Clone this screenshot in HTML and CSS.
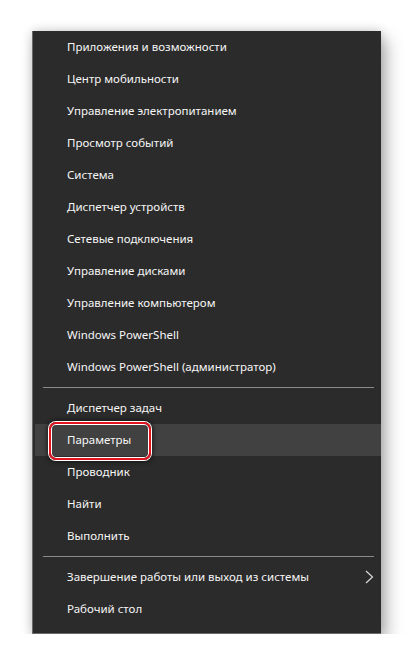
FILE: index.html
```html
<!DOCTYPE html>
<html lang="ru">
<head>
    <meta charset="UTF-8">
    <meta name="viewport" content="width=device-width, initial-scale=1.0">
    <title>Меню Win+X</title>
    <link rel="stylesheet" href="styles.css">
</head>
<body>
    <div class="menu">
        <ul class="menu-list">
            <li class="menu-item">Приложения и возможности</li>
            <li class="menu-item">Центр мобильности</li>
            <li class="menu-item">Управление электропитанием</li>
            <li class="menu-item">Просмотр событий</li>
            <li class="menu-item">Система</li>
            <li class="menu-item">Диспетчер устройств</li>
            <li class="menu-item">Сетевые подключения</li>
            <li class="menu-item">Управление дисками</li>
            <li class="menu-item">Управление компьютером</li>
            <li class="menu-item">Windows PowerShell</li>
            <li class="menu-item">Windows PowerShell (администратор)</li>
        </ul>
        <div class="separator"></div>
        <ul class="menu-list">
            <li class="menu-item">Диспетчер задач</li>
            <li class="menu-item active">
                Параметры
                <span class="mark"></span>
            </li>
            <li class="menu-item">Проводник</li>
            <li class="menu-item">Найти</li>
            <li class="menu-item">Выполнить</li>
        </ul>
        <div class="separator"></div>
        <ul class="menu-list">
            <li class="menu-item has-sub">
                Завершение работы или выход из системы
                <svg class="chevron" width="9" height="14" viewBox="0 0 9 14">
                    <polyline points="1,1 7.5,7 1,13" fill="none" stroke="#d8d8d8" stroke-width="1.2"/>
                </svg>
            </li>
            <li class="menu-item">Рабочий стол</li>
        </ul>
    </div>
</body>
</html>
```

FILE: styles.css
```css
body {
    margin: 0;
    padding: 31px 0 0 32px;
    background-color: #fff;
    font-family: "Noto Sans", "Open Sans", sans-serif;
}

.menu {
    width: 348px;
    padding-bottom: 8px;
    background-color: #2b2b2b;
    border-left: 1px solid #6a6a6a;
    border-bottom: 1px solid #6a6a6a;
    box-shadow: 0 0 10px rgba(0, 0, 0, 0.18), 6px 8px 16px rgba(0, 0, 0, 0.28);
}

.menu-list {
    list-style-type: none;
    margin: 0;
    padding: 0;
}

.menu-item {
    position: relative;
    display: flex;
    align-items: center;
    box-sizing: border-box;
    height: 32px;
    padding: 0 0 2px 34px;
    color: #f6f6f6;
    font-size: 11.5px;
}

.menu-item.active {
    margin-left: 2px;
    padding-left: 32px;
    background-color: #414141;
}

.separator {
    height: 1px;
    margin: 4px 7px 4px 10px;
    background-color: #8a8a8a;
}

.chevron {
    position: absolute;
    right: 7px;
    top: 9px;
}

.mark {
    position: absolute;
    left: 14px;
    top: -2px;
    width: 98px;
    height: 34px;
    border: 2px solid #e3141f;
    border-radius: 7px;
    box-shadow: 0 0 0 1px #fff, inset 0 0 0 1px #fff, 0 0 4px 2px rgba(0, 0, 0, 0.55);
}
```
